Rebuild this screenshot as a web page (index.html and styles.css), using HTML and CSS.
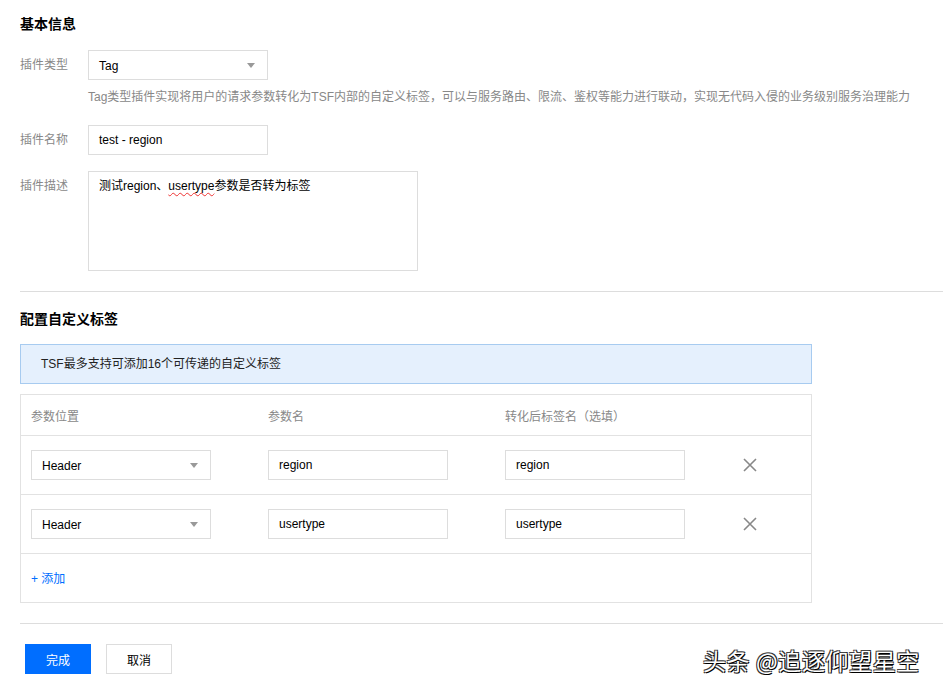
FILE: index.html
```html
<!DOCTYPE html>
<html lang="zh">
<head>
<meta charset="utf-8">
<link rel="stylesheet" href="styles.css">
</head>
<body>
<div class="page">
  <section class="basic">
    <h2 class="title">基本信息</h2>
    <div class="form-row">
      <div class="label">插件类型</div>
      <div class="field">
        <div class="select w180"><span>Tag</span><i class="caret"></i></div>
        <div class="help">Tag类型插件实现将用户的请求参数转化为TSF内部的自定义标签，可以与服务路由、限流、鉴权等能力进行联动，实现无代码入侵的业务级别服务治理能力</div>
      </div>
    </div>
    <div class="form-row">
      <div class="label">插件名称</div>
      <div class="field"><div class="input w180">test - region</div></div>
    </div>
    <div class="form-row">
      <div class="label lbl-top">插件描述</div>
      <div class="field"><div class="textarea">测试region、<span class="spell">usertype</span>参数是否转为标签</div></div>
    </div>
  </section>
  <hr class="divider">
  <section class="tags">
    <h2 class="title">配置自定义标签</h2>
    <div class="notice">TSF最多支持可添加16个可传递的自定义标签</div>
    <div class="table">
      <div class="trow thead">
        <div class="cell">参数位置</div>
        <div class="cell">参数名</div>
        <div class="cell">转化后标签名（选填）</div>
        <div class="cell act"></div>
      </div>
      <div class="trow">
        <div class="cell"><div class="select w180"><span>Header</span><i class="caret"></i></div></div>
        <div class="cell"><div class="input w180">region</div></div>
        <div class="cell"><div class="input w180">region</div></div>
        <div class="cell act"><svg class="close" viewBox="0 0 14 14" width="14" height="14"><path d="M1 1L13 13M13 1L1 13" stroke="#888" stroke-width="1.6" fill="none"/></svg></div>
      </div>
      <div class="trow">
        <div class="cell"><div class="select w180"><span>Header</span><i class="caret"></i></div></div>
        <div class="cell"><div class="input w180">usertype</div></div>
        <div class="cell"><div class="input w180">usertype</div></div>
        <div class="cell act"><svg class="close" viewBox="0 0 14 14" width="14" height="14"><path d="M1 1L13 13M13 1L1 13" stroke="#888" stroke-width="1.6" fill="none"/></svg></div>
      </div>
      <div class="add-row"><a class="add">+ 添加</a></div>
    </div>
  </section>
  <hr class="divider bottom">
  <div class="actions">
    <button class="btn primary">完成</button>
    <button class="btn">取消</button>
  </div>
</div>
<div class="watermark">头条 @追逐仰望星空</div>
</body>
</html>
```
FILE: styles.css
```css
* { box-sizing: border-box; }
html, body { margin: 0; padding: 0; background: #fff; }
body {
  font-family: "Liberation Sans", "Noto Sans CJK SC", sans-serif;
  font-size: 12px;
  color: #000;
  width: 943px;
  height: 693px;
  overflow: hidden;
  position: relative;
}
.page { padding: 14px 0 0 20px; }
.title {
  margin: 0;
  font-size: 14px;
  line-height: 20px;
  font-weight: bold;
  color: #000;
}
.basic .title { margin-bottom: 16px; }
.form-row { display: flex; margin-bottom: 16px; }
.form-row:last-child { margin-bottom: 0; }
.label {
  width: 68px;
  flex: none;
  color: #888;
  line-height: 30px;
}
.lbl-top { line-height: 30px; }
.field { flex: 1; }
.w180 { width: 180px; }
.select, .input {
  height: 30px;
  border: 1px solid #ddd;
  background: #fff;
  padding: 0 10px;
  line-height: 28px;
  color: #000;
  display: flex;
  align-items: center;
  justify-content: space-between;
}
.select { padding-top: 2px; }
.caret {
  width: 0; height: 0;
  border-left: 4px solid transparent;
  border-right: 4px solid transparent;
  border-top: 5px solid #999;
  margin-right: 2px;
  margin-top: -2px;
}
.help {
  color: #888;
  line-height: 18px;
  margin-top: 8px;
  margin-bottom: 3px;
}
.textarea {
  width: 330px;
  height: 100px;
  border: 1px solid #ddd;
  padding: 5px 10px;
  line-height: 18px;
}
.spell {
  text-decoration: underline wavy #e33;
  text-decoration-thickness: 1px;
  text-underline-offset: 2px;
}
.divider {
  border: 0;
  border-top: 1px solid #ddd;
  margin: 20px 0 0 0;
  height: 0;
}
.tags { padding-top: 17px; }
.notice {
  margin-top: 15px;
  width: 792px;
  height: 40px;
  background: #e5f0fd;
  border: 1px solid #a7cbf0;
  padding-left: 20px;
  line-height: 38px;
  color: #222;
}
.table {
  margin-top: 10px;
  width: 792px;
  border: 1px solid #e2e2e2;
}
.trow {
  display: flex;
  height: 59px;
  border-bottom: 1px solid #e2e2e2;
  align-items: center;
}
.trow.thead { height: 41px; color: #888; }
.cell { width: 237px; padding-left: 10px; flex: none; }
.cell.act { width: 80px; padding-left: 11px; display: flex; align-items: center; }
.add-row { height: 48px; padding-left: 10px; padding-bottom: 2px; display: flex; align-items: center; }
.add { color: #006eff; cursor: pointer; }
.divider.bottom { margin-top: 20px; }
.actions { display: flex; gap: 15px; padding: 20px 0 0 5px; }
.btn {
  width: 66px;
  height: 30px;
  border: 1px solid #ddd;
  background: #fff;
  font-family: inherit;
  font-size: 12px;
  color: #000;
  padding: 0;
}
.btn.primary { background: #006eff; border-color: #006eff; color: #fff; }
.watermark {
  position: absolute;
  left: 703px;
  top: 645px;
  font-family: "Noto Sans CJK SC", sans-serif;
  font-size: 23px;
  letter-spacing: 0.6px;
  line-height: 30px;
  color: #fff;
  text-shadow: 1px 1px 0 #000, -1px -1px 0 #444, 1px -1px 0 #333, -1px 1px 0 #333;
  white-space: nowrap;
}
```
